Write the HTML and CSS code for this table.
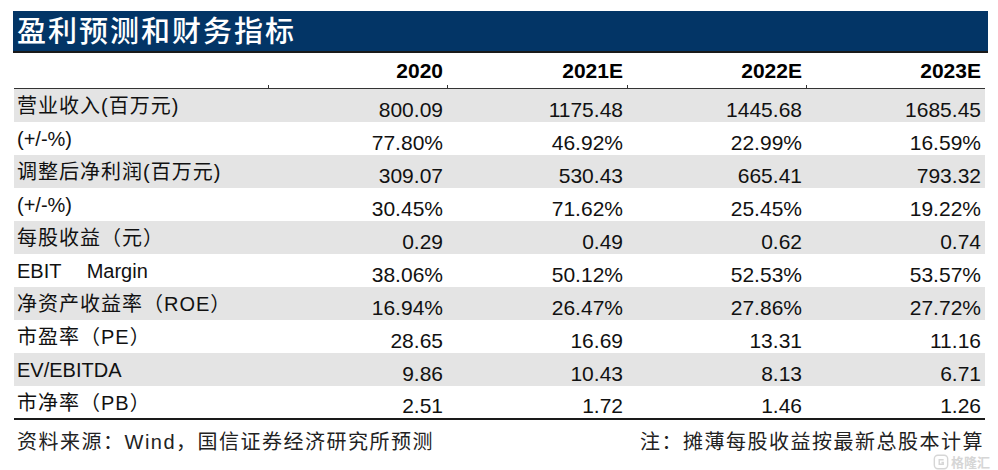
FILE: index.html
```html
<!DOCTYPE html>
<html lang="zh-CN">
<head>
<meta charset="utf-8">
<title>盈利预测和财务指标</title>
<link rel="stylesheet" href="styles.css">
</head>
<body>
<div class="page">
  <div class="title-bar"><span class="title">盈利预测和财务指标</span></div>
  <div class="table">
    <div class="row head">
      <div class="label"></div>
      <div class="num">2020</div>
      <div class="num">2021E</div>
      <div class="num">2022E</div>
      <div class="num">2023E</div>
    </div>
    <div class="row gray">
      <div class="label">营业收入(百万元)</div>
      <div class="num">800.09</div><div class="num">1175.48</div><div class="num">1445.68</div><div class="num">1685.45</div>
    </div>
    <div class="row">
      <div class="label latin">(+/-%)</div>
      <div class="num">77.80%</div><div class="num">46.92%</div><div class="num">22.99%</div><div class="num">16.59%</div>
    </div>
    <div class="row gray">
      <div class="label">调整后净利润(百万元)</div>
      <div class="num">309.07</div><div class="num">530.43</div><div class="num">665.41</div><div class="num">793.32</div>
    </div>
    <div class="row">
      <div class="label latin">(+/-%)</div>
      <div class="num">30.45%</div><div class="num">71.62%</div><div class="num">25.45%</div><div class="num">19.22%</div>
    </div>
    <div class="row gray">
      <div class="label">每股收益（元）</div>
      <div class="num">0.29</div><div class="num">0.49</div><div class="num">0.62</div><div class="num">0.74</div>
    </div>
    <div class="row">
      <div class="label latin">EBIT 　Margin</div>
      <div class="num">38.06%</div><div class="num">50.12%</div><div class="num">52.53%</div><div class="num">53.57%</div>
    </div>
    <div class="row gray">
      <div class="label">净资产收益率（ROE）</div>
      <div class="num">16.94%</div><div class="num">26.47%</div><div class="num">27.86%</div><div class="num">27.72%</div>
    </div>
    <div class="row">
      <div class="label">市盈率（PE）</div>
      <div class="num">28.65</div><div class="num">16.69</div><div class="num">13.31</div><div class="num">11.16</div>
    </div>
    <div class="row gray">
      <div class="label latin">EV/EBITDA</div>
      <div class="num">9.86</div><div class="num">10.43</div><div class="num">8.13</div><div class="num">6.71</div>
    </div>
    <div class="row last">
      <div class="label">市净率（PB）</div>
      <div class="num">2.51</div><div class="num">1.72</div><div class="num">1.46</div><div class="num">1.26</div>
    </div>
  </div>
  <div class="footer">
    <span class="note">资料来源：Wind，国信证券经济研究所预测</span>
    <span class="note">注：摊薄每股收益按最新总股本计算</span>
  </div>
  <div class="watermark">
    <svg width="16" height="16" viewBox="0 0 18 18"><rect x="1.5" y="1.5" width="15" height="15" rx="4" fill="none" stroke="#d6d6d6" stroke-width="1.6"/><path d="M12 6.5 H7 V11.5 H11.5 V9.5 H9.5" fill="none" stroke="#d6d6d6" stroke-width="1.6"/></svg>
    <span>格隆汇</span>
  </div>
</div>
</body>
</html>
```
FILE: styles.css
```css
* { box-sizing: border-box; }
html, body { margin: 0; padding: 0; background: #ffffff; }
body {
  font-family: "Liberation Sans", "Noto Sans CJK SC", sans-serif;
  color: #111111;
}
.page {
  position: relative;
  width: 998px;
  height: 470px;
  padding: 11px 10px 0 14px;
}
.title-bar {
  height: 42px;
  background: #033566;
  border-bottom: 2px solid #1a1a1a;
  margin-left: -1px;
  padding-left: 4px;
  display: flex;
  align-items: flex-start;
}
.title {
  font-family: "Noto Sans CJK SC", sans-serif;
  font-size: 29px;
  font-weight: 500;
  letter-spacing: 2px;
  line-height: 36px;
  color: #ffffff;
}
.table {
  width: 971px;
}
.row {
  display: grid;
  grid-template-columns: 254px 179px 180px 179px 179px;
  height: 33px;
}
.row.gray { background: #e4e4e4; }
.row.head {
  height: 36px;
  background: #ffffff;
  border-bottom: 1px solid #333333;
  background-image:
    linear-gradient(#333, #333), linear-gradient(#333, #333),
    linear-gradient(#333, #333), linear-gradient(#333, #333);
  background-size: 1px 3px;
  background-repeat: no-repeat;
  background-position: 254px 100%, 433px 100%, 613px 100%, 792px 100%;
}
.row.head .num {
  font-weight: 700;
  font-size: 21px;
  padding-bottom: 6px;
  color: #000;
}
.row.last {
  height: 34px;
  border-bottom: 2px solid #1a1a1a;
}
.label {
  font-size: 20px;
  line-height: 22px;
  letter-spacing: 1px;
  padding: 6px 0 0 3px;
  white-space: nowrap;
}
.label.latin {
  letter-spacing: 0;
}
.num {
  font-size: 21px;
  line-height: 22px;
  text-align: right;
  padding-right: 4px;
  display: flex;
  align-items: flex-end;
  justify-content: flex-end;
  padding-bottom: 1px;
}
.footer {
  width: 972px;
  display: flex;
  justify-content: space-between;
  padding: 10px 2px 0 3px;
}
.note {
  font-size: 20px;
  line-height: 24px;
  letter-spacing: 1.5px;
  color: #222222;
}
.watermark {
  position: absolute;
  right: 8px;
  bottom: 0;
  display: flex;
  align-items: center;
  gap: 2px;
  color: #d6d6d6;
  font-family: "Noto Sans CJK SC", sans-serif;
  font-size: 13px;
  line-height: 16px;
  font-weight: 700;
}
```
